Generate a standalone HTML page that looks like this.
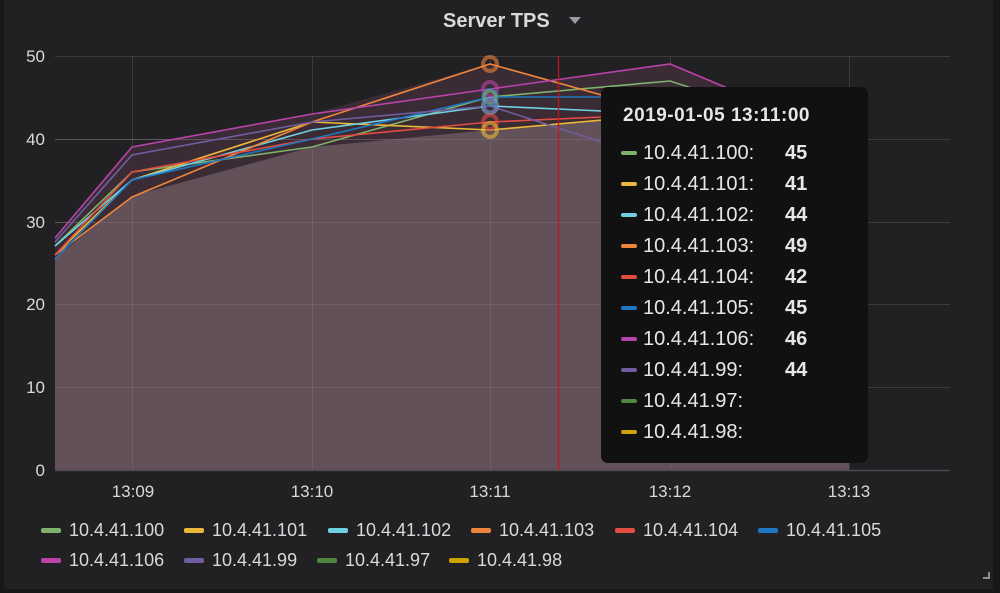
<!DOCTYPE html>
<html><head><meta charset="utf-8"><style>
html,body{margin:0;padding:0;background:#161719;}
body{width:1000px;height:593px;position:relative;overflow:hidden;font-family:"Liberation Sans",sans-serif;}
.panel{position:absolute;left:4px;top:0;width:989px;height:589px;background:#212124;border-radius:3px;}
.t{position:absolute;color:#d8d9da;}
.tip{position:absolute;left:601px;top:87px;width:267px;height:376px;background:#111112;border-radius:7px;}
.tip .h{position:absolute;left:22px;top:18px;font-size:19px;font-weight:bold;color:#e6e6e6;letter-spacing:0.5px}
.row{position:absolute;left:20px;font-size:20px;color:#e6e6e6;height:22px;}
.row i{position:absolute;left:0;top:9px;width:16px;height:4px;border-radius:2px;}
.row span{position:absolute;left:22px;top:0;white-space:nowrap}
.row b{position:absolute;left:164px;top:0;}
.lg{position:absolute;font-size:18px;color:#d8d9da;white-space:nowrap;height:20px}
.lg i{position:absolute;left:0;top:8px;width:20px;height:5px;border-radius:2px;}
.lg span{position:absolute;left:28px;top:0}
</style></head><body>
<div class="panel"></div>
<div class="t" style="left:443px;top:10px;font-size:20px;font-weight:bold;">Server TPS</div>
<svg style="position:absolute;left:569px;top:17px" width="12" height="8"><path d="M0 0 L12 0 L6 7 Z" fill="#9b9b9f"/></svg>
<svg style="position:absolute;left:0;top:0" width="1000" height="593">
<g stroke="#3b3b3e" stroke-width="1">
<line x1="55" y1="56.5" x2="950" y2="56.5"/><line x1="55" y1="139.5" x2="950" y2="139.5"/><line x1="55" y1="222.5" x2="950" y2="222.5"/><line x1="55" y1="304.5" x2="950" y2="304.5"/><line x1="55" y1="387.5" x2="950" y2="387.5"/>
<line x1="132.5" y1="56" x2="132.5" y2="470"/><line x1="312.5" y1="56" x2="312.5" y2="470"/><line x1="490.5" y1="56" x2="490.5" y2="470"/><line x1="670.5" y1="56" x2="670.5" y2="470"/><line x1="849.5" y1="56" x2="849.5" y2="470"/>
</g>
<polygon points="55,470 55,238 132,147 312,114 490,64 550,81 670,64 849,139 849,470" fill="#3a2b35"/>
<polygon points="55,470 55,258 132,196 312,147 490,130 670,114 849,139 849,470" fill="#625158"/>
<g stroke="#7b6a72" stroke-width="1" opacity="0.6">
<line x1="132.5" y1="200" x2="132.5" y2="470"/><line x1="312.5" y1="150" x2="312.5" y2="470"/><line x1="490.5" y1="140" x2="490.5" y2="470"/><line x1="670.5" y1="130" x2="670.5" y2="470"/>
<line x1="55" y1="222.5" x2="849" y2="222.5"/><line x1="55" y1="304.5" x2="849" y2="304.5"/><line x1="55" y1="387.5" x2="849" y2="387.5"/><line x1="55" y1="139.5" x2="849" y2="139.5"/>
</g>
<g fill="none" stroke-width="1.6">
<polyline stroke="#7eb26d" points="55,246 132,172 312,147 490,97 670,81 849,139"/>
<polyline stroke="#eab839" points="55,255 132,180 312,122 490,130 670,114 849,139"/>
<polyline stroke="#6ed0e0" points="55,246 132,180 312,130 490,106 670,114 849,139"/>
<polyline stroke="#ef843c" points="55,255 132,197 312,122 490,64 670,114 849,139"/>
<polyline stroke="#e24d42" points="55,255 132,172 312,139 490,122 670,114 849,139"/>
<polyline stroke="#1f78c1" points="55,259 132,180 312,139 490,97 670,97 849,139"/>
<polyline stroke="#ba43a9" points="55,238 132,147 312,114 490,89 670,64 849,139"/>
<polyline stroke="#705da0" points="55,242 132,155 312,122 490,106 670,164 849,155"/>
</g>
<g fill="none" stroke-width="4" stroke-opacity="0.6">
<circle cx="490" cy="64" r="7" stroke="#ef843c"/>
<circle cx="490" cy="89" r="7" stroke="#ba43a9"/>
<circle cx="490" cy="97" r="7" stroke="#1f78c1"/>
<circle cx="490" cy="97" r="6" stroke="#7eb26d"/>
<circle cx="490" cy="106" r="7" stroke="#6ed0e0"/>
<circle cx="490" cy="106" r="6" stroke="#705da0"/>
<circle cx="490" cy="122" r="7" stroke="#e24d42"/>
<circle cx="490" cy="130" r="7" stroke="#eab839"/>
</g>
<line x1="558.5" y1="56" x2="558.5" y2="470" stroke="#c4161f" stroke-width="1.2"/>
<line x1="55" y1="470.5" x2="950" y2="470.5" stroke="#4a4a4e" stroke-width="1.5"/>
<g fill="#d8d9da" font-size="17" font-family="Liberation Sans, sans-serif" text-anchor="end">
<text x="45" y="62">50</text><text x="45" y="145">40</text><text x="45" y="228">30</text><text x="45" y="310">20</text><text x="45" y="393">10</text><text x="45" y="476">0</text>
</g>
<g fill="#d8d9da" font-size="17" font-family="Liberation Sans, sans-serif" text-anchor="middle">
<text x="133" y="497">13:09</text><text x="312" y="497">13:10</text><text x="490" y="497">13:11</text><text x="670" y="497">13:12</text><text x="849" y="497">13:13</text>
</g>
<path d="M983 578 L989 578 L989 572" stroke="#8e8e8e" stroke-width="2" fill="none"/>
</svg>
<div class="tip">
<div class="h">2019-01-05 13:11:00</div>
<div class="row" style="top:55px"><i style="background:#7eb26d"></i><span>10.4.41.100:</span><b>45</b></div>
<div class="row" style="top:86px"><i style="background:#eab839"></i><span>10.4.41.101:</span><b>41</b></div>
<div class="row" style="top:117px"><i style="background:#6ed0e0"></i><span>10.4.41.102:</span><b>44</b></div>
<div class="row" style="top:148px"><i style="background:#ef843c"></i><span>10.4.41.103:</span><b>49</b></div>
<div class="row" style="top:179px"><i style="background:#e24d42"></i><span>10.4.41.104:</span><b>42</b></div>
<div class="row" style="top:210px"><i style="background:#1f78c1"></i><span>10.4.41.105:</span><b>45</b></div>
<div class="row" style="top:241px"><i style="background:#ba43a9"></i><span>10.4.41.106:</span><b>46</b></div>
<div class="row" style="top:272px"><i style="background:#705da0"></i><span>10.4.41.99:</span><b>44</b></div>
<div class="row" style="top:303px"><i style="background:#508642"></i><span>10.4.41.97:</span></div>
<div class="row" style="top:334px"><i style="background:#cca300"></i><span>10.4.41.98:</span></div>
</div>
<div class="lg" style="left:41px;top:520px"><i style="background:#7eb26d"></i><span>10.4.41.100</span></div>
<div class="lg" style="left:184px;top:520px"><i style="background:#eab839"></i><span>10.4.41.101</span></div>
<div class="lg" style="left:328px;top:520px"><i style="background:#6ed0e0"></i><span>10.4.41.102</span></div>
<div class="lg" style="left:471px;top:520px"><i style="background:#ef843c"></i><span>10.4.41.103</span></div>
<div class="lg" style="left:615px;top:520px"><i style="background:#e24d42"></i><span>10.4.41.104</span></div>
<div class="lg" style="left:758px;top:520px"><i style="background:#1f78c1"></i><span>10.4.41.105</span></div>
<div class="lg" style="left:41px;top:550px"><i style="background:#ba43a9"></i><span>10.4.41.106</span></div>
<div class="lg" style="left:184px;top:550px"><i style="background:#705da0"></i><span>10.4.41.99</span></div>
<div class="lg" style="left:317px;top:550px"><i style="background:#508642"></i><span>10.4.41.97</span></div>
<div class="lg" style="left:449px;top:550px"><i style="background:#cca300"></i><span>10.4.41.98</span></div>
</body></html>
